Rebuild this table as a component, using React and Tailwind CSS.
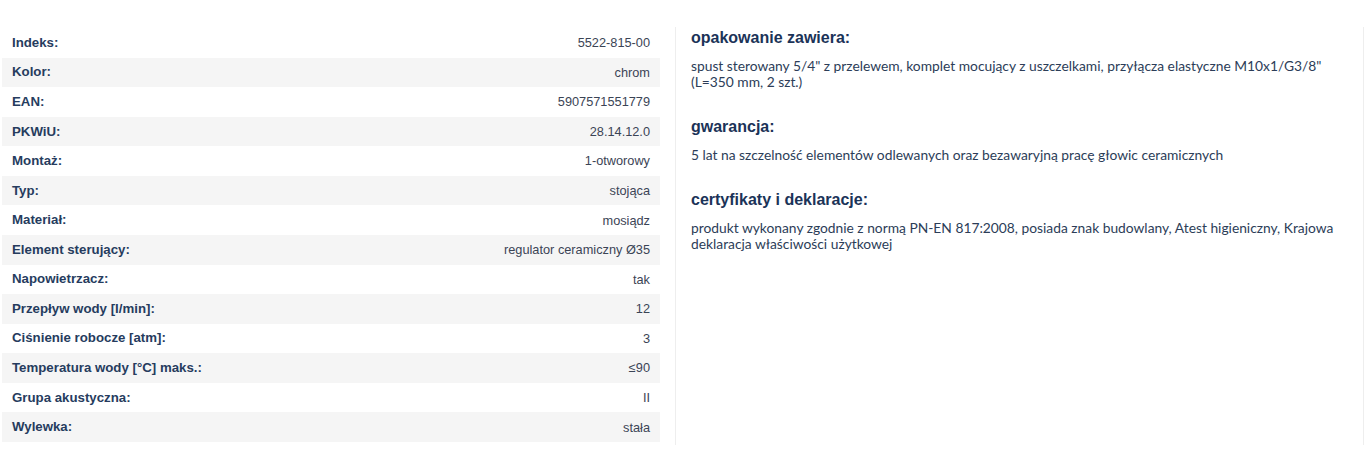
import React from "react";

const rows = [
  ["Indeks:", "5522-815-00"],
  ["Kolor:", "chrom"],
  ["EAN:", "5907571551779"],
  ["PKWiU:", "28.14.12.0"],
  ["Montaż:", "1-otworowy"],
  ["Typ:", "stojąca"],
  ["Materiał:", "mosiądz"],
  ["Element sterujący:", "regulator ceramiczny Ø35"],
  ["Napowietrzacz:", "tak"],
  ["Przepływ wody [l/min]:", "12"],
  ["Ciśnienie robocze [atm]:", "3"],
  ["Temperatura wody [°C] maks.:", "≤90"],
  ["Grupa akustyczna:", "II"],
  ["Wylewka:", "stała"],
];

const sections = [
  {
    h: "opakowanie zawiera:",
    t: 'spust sterowany 5/4" z przelewem, komplet mocujący z uszczelkami, przyłącza elastyczne M10x1/G3/8" (L=350 mm, 2 szt.)',
  },
  {
    h: "gwarancja:",
    t: "5 lat na szczelność elementów odlewanych oraz bezawaryjną pracę głowic ceramicznych",
  },
  {
    h: "certyfikaty i deklaracje:",
    t: "produkt wykonany zgodnie z normą PN-EN 817:2008, posiada znak budowlany, Atest higieniczny, Krajowa deklaracja właściwości użytkowej",
  },
];

export default function App() {
  return (
    <div className="w-[1368px] h-[476px] bg-white flex items-start pt-[28px]">
      <div className="ml-[2px] w-[658px] flex flex-col font-['Liberation_Sans',Arial,sans-serif]">
        {rows.map(([k, v], i) => (
          <div
            key={k}
            className={`h-[29.57px] flex items-center justify-between pl-[10px] pr-[10px] ${i % 2 === 1 ? "bg-[#f5f5f5]" : "bg-white"}`}
          >
            <span className="text-[13.25px] font-bold text-[#263c5e]">{k}</span>
            <span className="text-[12.75px] text-[#3b4455]">{v}</span>
          </div>
        ))}
      </div>
      <div className="ml-[15px] w-[689px] h-[418px] -mt-[1px] border-l border-r border-[#eeeeee] pl-[15px] pr-[20px] pt-[1px]">
        {sections.map((s, i) => (
          <div key={s.h} className={i === 0 ? "" : "mt-[27px]"}>
            <h3 className="font-['Liberation_Sans',Arial,sans-serif] font-bold text-[16px] leading-[20px] text-[#1b3358]">
              {s.h}
            </h3>
            <p className="mt-[10px] font-['Lato',sans-serif] text-[13.8px] leading-[16px] text-[#2c3d58]">
              {s.t}
            </p>
          </div>
        ))}
      </div>
    </div>
  );
}
